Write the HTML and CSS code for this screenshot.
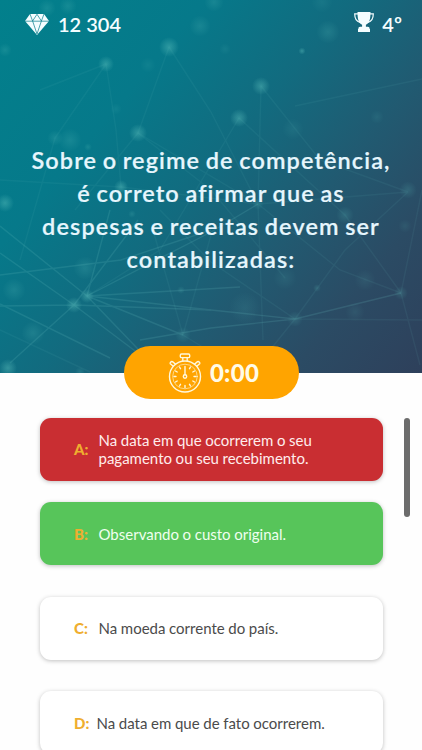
FILE: index.html
```
<!DOCTYPE html>
<html lang="pt-br">
<head>
    <meta charset="UTF-8">
    <meta name="viewport" content="width=device-width, initial-scale=1.0">
    <title>Quiz</title>
    <link rel="stylesheet" href="styles.css">
</head>

<body>
    <div class="hero">
        <svg class="hero-bg" viewBox="0 0 422 373" preserveAspectRatio="none">
            <defs>
                <radialGradient id="glow">
                    <stop offset="0" stop-color="#62c5c0" stop-opacity="0.42"/>
                    <stop offset="0.4" stop-color="#62c5c0" stop-opacity="0.26"/>
                    <stop offset="1" stop-color="#62c5c0" stop-opacity="0"/>
                </radialGradient>
            </defs>
            <!-- connections -->
            <g stroke="#6cc3c3" stroke-width="1.4" fill="none" opacity="0.08">
                <path d="M106 64L55 138L20 260M106 64L116 130L121 187M106 64L40 90M138 133L169 47M138 133L75 210"/>
                <path d="M138 133L258 204M138 133L211 190L285 278M169 47L211 112L258 204M261 86L258 204L263 340M261 86L320 160L408 192"/>
                <path d="M239 118L160 250L87 296M239 118L345 215L401 293M0 180L121 187L258 204L408 192M295 106L422 79"/>
                <path d="M295 319L345 250L408 192M295 319L270 350M183 335L240 370M401 293L422 190M401 293L420 365M401 293L340 270L258 204"/>
                <path d="M295 319L211 262L160 210M295 319L422 320M183 335L211 235M183 335L153 230M0 330L90 372"/>
            </g>
            <g stroke="#6cc3c3" stroke-width="1.4" fill="none" opacity="0.17">
                <path d="M87 296L0 226M87 296L110 210M87 296L211 232L258 204M87 296L240 287M87 296L160 372M87 296L183 335"/>
                <path d="M74 305L0 253M74 305L0 306M74 305L138 220M74 305L211 310M74 305L155 366M74 305L10 363"/>
                <path d="M0 275L121 260L211 230M0 304L110 358M295 319L401 293M295 319L211 328L140 340M295 319L211 310L87 296"/>
            </g>
            <!-- lights -->
            <g fill="url(#glow)">
                <circle cx="106" cy="64" r="8"/>
                <circle cx="169" cy="47" r="10"/>
                <circle cx="138" cy="133" r="9"/>
                <circle cx="261" cy="86" r="9"/>
                <circle cx="239" cy="118" r="9"/>
                <circle cx="302" cy="51" r="3.5"/>
                <circle cx="121" cy="187" r="7"/>
                <circle cx="74" cy="305" r="8"/>
                <circle cx="87" cy="296" r="7"/>
                <circle cx="5" cy="203" r="9"/>
                <circle cx="8" cy="368" r="9"/>
            </g>
            <g fill="url(#glow)" opacity="0.45">
                <circle cx="328" cy="32" r="12"/>
                <circle cx="200" cy="26" r="11"/>
                <circle cx="214" cy="2" r="10"/>
                <circle cx="47" cy="8" r="9"/>
                <circle cx="68" cy="6" r="9"/>
                <circle cx="5" cy="50" r="7"/>
                <circle cx="55" cy="138" r="8"/>
                <circle cx="70" cy="140" r="12"/>
                <circle cx="88" cy="147" r="4"/>
                <circle cx="85" cy="268" r="12"/>
                <circle cx="14" cy="290" r="12"/>
                <circle cx="33" cy="333" r="12"/>
                <circle cx="183" cy="335" r="8"/>
                <circle cx="181" cy="290" r="4"/>
                <circle cx="132" cy="214" r="4"/>
                <circle cx="80" cy="372" r="5"/>
                <circle cx="258" cy="204" r="6"/>
                <circle cx="408" cy="190" r="9"/>
                <circle cx="345" cy="215" r="9"/>
                <circle cx="401" cy="293" r="7"/>
                <circle cx="295" cy="319" r="8"/>
                <circle cx="317" cy="288" r="4"/>
            </g>
            <g fill="url(#glow)" opacity="0.25">
                <circle cx="148" cy="65" r="8"/>
                <circle cx="116" cy="109" r="6"/>
                <circle cx="225" cy="49" r="6"/>
                <circle cx="293" cy="129" r="11"/>
                <circle cx="377" cy="117" r="7"/>
                <circle cx="322" cy="2" r="11"/>
                <circle cx="285" cy="278" r="12"/>
                <circle cx="355" cy="312" r="10"/>
                <circle cx="365" cy="280" r="11"/>
                <circle cx="405" cy="226" r="7"/>
                <circle cx="245" cy="308" r="16"/>
            </g>
        </svg>

        <div class="top-bar">
            <div class="score">
                <svg class="diamond" width="24" height="21" viewBox="0 0 24 21">
                    <path fill="#f4fdff" d="M5 0h14l5 7L12 21 0 7z"/>
                    <path fill="none" stroke="#067c8b" stroke-width="0.7" d="M0 7.200h24M5 0l2.600 7L12 .3 16.400 7 19 0M7.600 7L12 20l4.400-13"/>
                </svg>
                <span>12 304</span>
            </div>
            <div class="rank">
                <svg class="trophy" width="20" height="20" viewBox="0 0 20 20">
                    <path fill="#f4fdff" d="M3.500 0h13c0 6.500-.8 11-4.600 12.800v2h2c1 0 1.700.7 1.700 1.700v.5h.4v3H4v-3h.4v-.5c0-1 .7-1.700 1.700-1.700h2v-2C4.300 11 3.500 6.500 3.500 0z"/>
                    <path fill="none" stroke="#f4fdff" stroke-width="1.2" d="M4 1.800H.7c0 4.500 1.600 7.700 5.300 8.700M16 1.800h3.300c0 4.500-1.600 7.700-5.300 8.700"/>
                </svg>
                <span>4º</span>
            </div>
        </div>

        <h1 class="question">Sobre o regime de competência,<br>é correto afirmar que as<br>despesas e receitas devem ser<br>contabilizadas:</h1>
    </div>

    <div class="timer">
        <svg class="stopwatch" width="34" height="40" viewBox="0 0 34 40">
            <g fill="none" stroke="#fff8dc" stroke-width="1.4" stroke-linecap="round" stroke-linejoin="round">
                <circle cx="17" cy="23.5" r="15.5"/>
                <circle cx="17" cy="23.5" r="12.3" stroke-width="0.6"/>
                <rect x="12.3" y="1" width="9.4" height="3.6" rx="1.2"/>
                <path d="M14.800 4.800v3M19.200 4.800v3"/>
                <path d="M5 13L2.300 10.800c-.7-.8.8-2.800 2.200-2.200L7.300 11M29 13l2.700-2.200c.7-.8-.8-2.800-2.200-2.200L26.700 11"/>
                <circle cx="17" cy="23.5" r="1.7"/>
                <path d="M17 21.500v-8M17 32.500v2M6 23.500h2M26 23.500h2M11.500 14l1 1.700M22.500 14l-1 1.700M7.500 18l1.700 1M26.500 18l-1.700 1M7.500 29l1.700-1M26.500 29l-1.700-1M11.500 33l1-1.700M22.500 33l-1-1.700"/>
            </g>
        </svg>
        <span>0:00</span>
    </div>

    <div class="content">
        <div class="answers">
            <div class="answer wrong">
                <span class="letter">A:</span>
                <span>Na data em que ocorrerem o seu<br>pagamento ou seu recebimento.</span>
            </div>
            <div class="answer right">
                <span class="letter">B:</span>
                <span>Observando o custo original.</span>
            </div>
            <div class="answer">
                <span class="letter">C:</span>
                <span>Na moeda corrente do país.</span>
            </div>
            <div class="answer">
                <span class="letter letter-d">D:</span>
                <span>Na data em que de fato ocorrerem.</span>
            </div>
        </div>
        <div class="scrollbar"></div>
    </div>
</body>
</html>
```
FILE: styles.css
```
body {
    font-family: Lato, sans-serif;
    background-color: #fefefe;
    margin: 0px;
    padding: 0px;
    height: 750px;
    overflow: hidden;
}

.hero {
    position: relative;
    height: 373px;
    background: linear-gradient(130deg, #02808c 0%, #06798a 28%, #126b7f 48%, #215a71 66%, #2b4b64 82%, #2e405b 100%);
    color: #e6f6fd;
    overflow: hidden;
}

.hero-bg {
    position: absolute;
    top: 0;
    left: 0;
    width: 100%;
    height: 100%;
}

.top-bar {
    position: relative;
    display: flex;
    justify-content: space-between;
    height: 48px;
    padding: 0 20px 0 25px;
    font-size: 20px;
    font-weight: 600;
    color: #f4fdff;
}

.score,
.rank {
    display: flex;
    align-items: center;
}

.score {
    gap: 9px;
}

.rank {
    gap: 8px;
}

.trophy {
    margin-bottom: 4px;
}

.question {
    position: relative;
    margin: 96px 0 0;
    font-size: 23.5px;
    font-weight: 600;
    line-height: 33px;
    letter-spacing: 1.1px;
    word-spacing: -1.4px;
    text-align: center;
    white-space: nowrap;
    -webkit-text-stroke: 0.2px #e6f6fd;
}

.timer {
    position: relative;
    display: flex;
    align-items: center;
    justify-content: center;
    gap: 8px;
    box-sizing: border-box;
    width: 175px;
    height: 53px;
    margin: -27px 0 0 124px;
    padding-left: 4px;
    border-radius: 27px;
    background-color: #ffa400;
    color: #fffbe8;
    font-size: 24px;
    font-weight: 900;
    letter-spacing: 0.3px;
}

.content {
    display: flex;
    justify-content: space-between;
    padding: 19px 12px 0 40px;
}

.answers {
    width: 343px;
}

.answer {
    display: flex;
    align-items: center;
    box-sizing: border-box;
    height: 63px;
    margin-bottom: 31.5px;
    padding-left: 34px;
    border-radius: 11px;
    background-color: white;
    box-shadow: 0 1px 4px rgba(0, 0, 0, 0.25);
    color: #4b4b4b;
    font-size: 15px;
    line-height: 18px;
    word-spacing: -0.2px;
    white-space: nowrap;
}

.wrong {
    margin-bottom: 21.2px;
    padding-bottom: 2px;
    background-color: #c92e32;
    color: #ffecec;
}

.right {
    background-color: #57c55a;
    color: #efffef;
}

.letter {
    width: 24.5px;
    color: #efae2f;
    font-weight: 900;
}

.letter-d {
    width: 22.5px;
}

.scrollbar {
    width: 6.5px;
    height: 99px;
    border-radius: 4px;
    background-color: #6c6c6c;
}
```
